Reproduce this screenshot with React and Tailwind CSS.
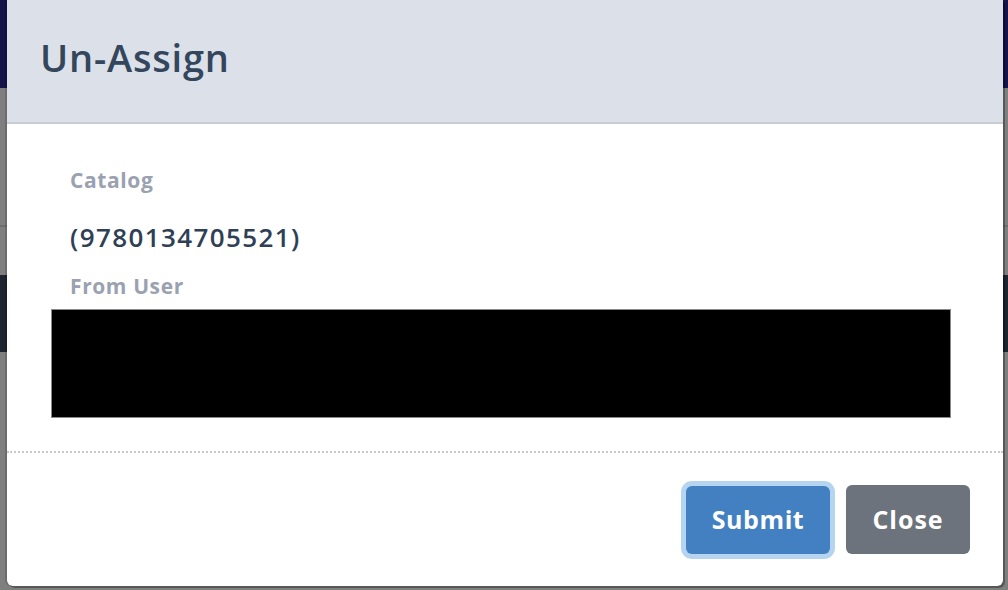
import React from 'react'

export default function App(){
  return (
    <div className="relative w-[1008px] h-[590px] overflow-hidden bg-[#7f7f7f]" style={{fontFamily:'"Open Sans", "Liberation Sans", sans-serif'}}>
      {/* dimmed page behind the modal */}
      <div className="flex flex-col">
        <div className="h-[88px] bg-[#14134a]" />
        <div className="h-[139px] border-b-2 border-[#6e6e6e]" />
        <div className="h-[48px]" />
        <div className="h-[77px] bg-[#1e2530]" />
      </div>

      {/* modal */}
      <div className="absolute left-[7px] right-[5px] top-0 h-[586px] flex flex-col bg-white rounded-b-[6px] shadow-[2px_2px_0_0_rgba(0,0,0,0.3),-2px_0_0_0_rgba(0,0,0,0.15)]">
        <div className="h-[124px] shrink-0 flex items-center px-[33px] bg-[#dce0e9] border-b-2 border-[#c8ccd5]">
          <h1 className="text-[38px] font-semibold text-[#34465c] tracking-[0.8px] -mt-[8px]">Un-Assign</h1>
        </div>

        <div className="flex-1 flex flex-col px-[44px] pt-[42px]">
          <div className="pl-[19px] text-[21px] leading-[28px] font-bold tracking-[0.6px] text-[#9aa1b0]">Catalog</div>
          <div className="pl-[19px] mt-[26px] text-[26px] leading-[34px] font-semibold tracking-[1.4px] text-[#2f3f55]">(9780134705521)</div>
          <div className="pl-[19px] mt-[18px] text-[21px] leading-[28px] font-bold tracking-[0.6px] text-[#9aa1b0]">From User</div>
          <div className="mt-[9px] w-[900px] h-[109px] bg-black border border-[#8a8a8a]" />
        </div>

        <div className="shrink-0 border-t-2 border-dotted border-[#c8c8c8] flex justify-end items-center gap-[16px] pt-[32px] pb-[32px] pr-[33px]">
          <button className="w-[144px] h-[68px] rounded-[6px] bg-[#4280c2] text-white text-[25px] font-bold tracking-[0.6px] ring-[5px] ring-[#b5d4ef]">Submit</button>
          <button className="w-[124px] h-[69px] rounded-[6px] bg-[#6c737c] text-white text-[25px] font-bold tracking-[1px]">Close</button>
        </div>
      </div>
    </div>
  )
}
